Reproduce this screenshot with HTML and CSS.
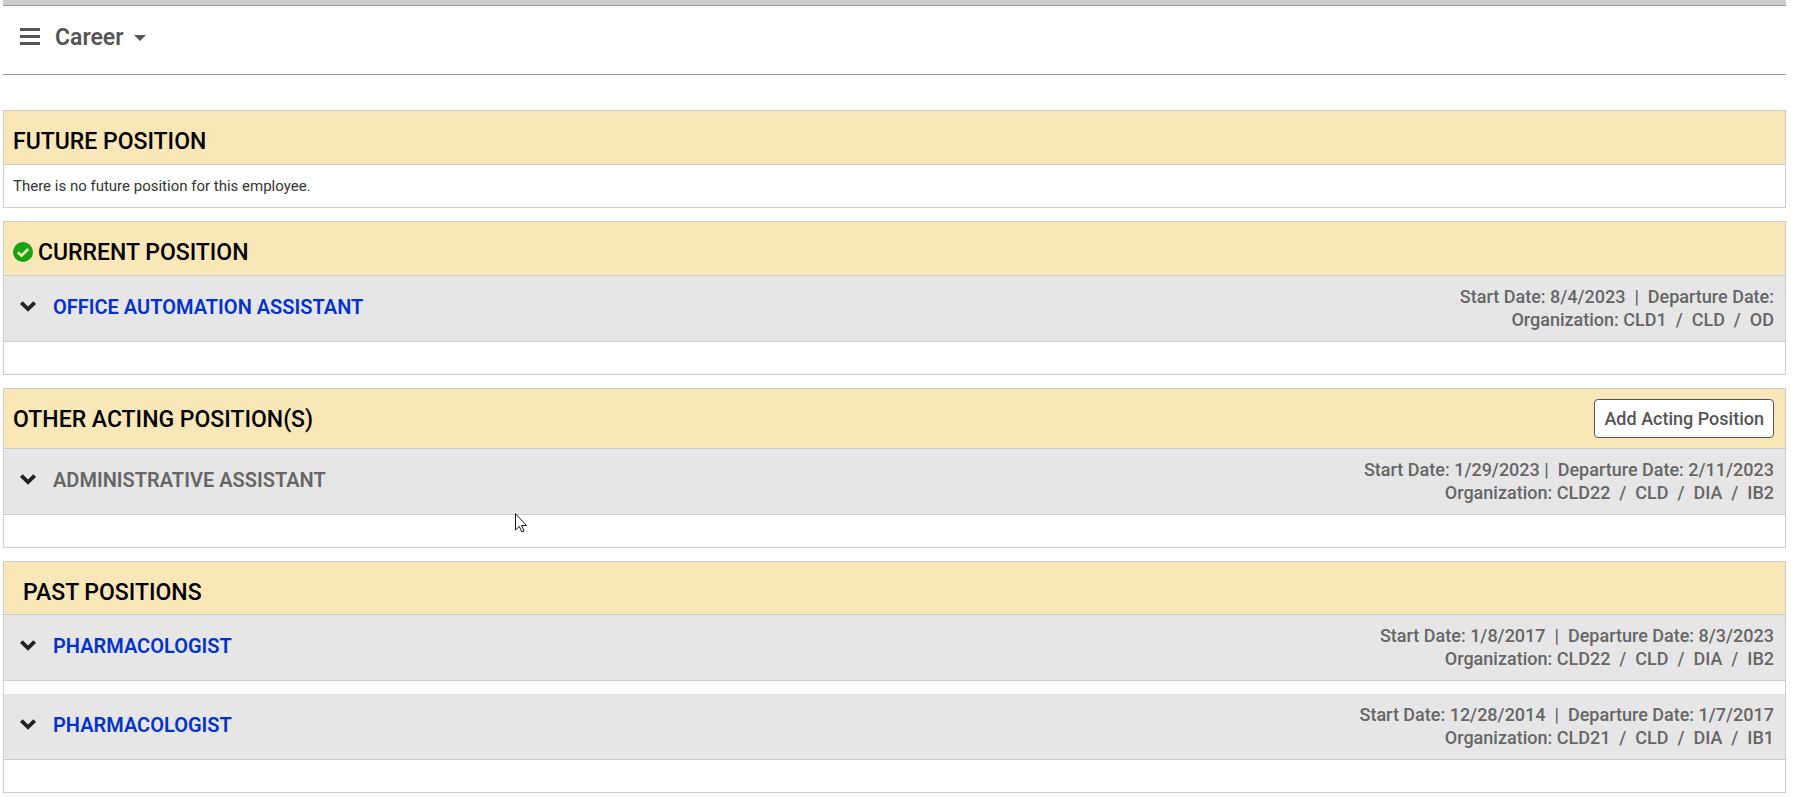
FILE: index.html
```html
<!DOCTYPE html>
<html lang="en">
<head>
<meta charset="utf-8">
<meta name="viewport" content="width=device-width, initial-scale=1">
<title>Career</title>
<link rel="stylesheet" href="styles.css">
</head>
<body>
<svg width="0" height="0" class="defs" aria-hidden="true">
  <symbol id="chevron" viewBox="0 0 16 11"><path d="M0 3 2.700.3 8 5.400 13.300.3 16 3 8 10.700z" fill="currentColor"/></symbol>
</svg>
<header class="topbar">
  <button class="menu" type="button" aria-label="Menu">
    <svg width="20" height="17" viewBox="0 0 20 17" aria-hidden="true"><path d="M0 0h20v3H0zM0 7h20v3H0zM0 14h20v3H0z" fill="currentColor"/></svg>
  </button>
  <button class="section-switch" type="button">Career
    <svg width="12" height="6" viewBox="0 0 12 6" aria-hidden="true"><path d="M0 0h12L6 6z" fill="currentColor"/></svg>
  </button>
</header>
<main class="cards">
  <section class="card">
    <div class="card-head"><h2>FUTURE POSITION</h2></div>
    <p class="empty">There is no future position for this employee.</p>
  </section>

  <section class="card">
    <div class="card-head">
      <svg class="check" width="20" height="20" viewBox="0 0 20 20" aria-hidden="true"><circle cx="10" cy="10" r="10" fill="#17a314"/><path d="M4.800 10.200 8.500 13.700l6.700-6.700" fill="none" stroke="#fae7b8" stroke-width="2.600"/></svg>
      <h2>CURRENT POSITION</h2>
    </div>
    <div class="position">
      <button class="toggle" type="button" aria-label="Expand"><svg width="16" height="11"><use href="#chevron"/></svg></button>
      <a class="title" href="#">OFFICE AUTOMATION ASSISTANT</a>
      <div class="meta">
        <div>Start Date: 8/4/2023&nbsp; |&nbsp; Departure Date:</div>
        <div>Organization: CLD1&nbsp; /&nbsp; CLD&nbsp; /&nbsp; OD</div>
      </div>
    </div>
    <div class="details"></div>
  </section>

  <section class="card">
    <div class="card-head with-action">
      <h2>OTHER ACTING POSITION(S)</h2>
      <button class="add" type="button">Add Acting Position</button>
    </div>
    <div class="position">
      <button class="toggle" type="button" aria-label="Expand"><svg width="16" height="11"><use href="#chevron"/></svg></button>
      <span class="title">ADMINISTRATIVE ASSISTANT</span>
      <div class="meta">
        <div>Start Date: 1/29/2023 |&nbsp; Departure Date: 2/11/2023</div>
        <div>Organization: CLD22&nbsp; /&nbsp; CLD&nbsp; /&nbsp; DIA&nbsp; /&nbsp; IB2</div>
      </div>
    </div>
    <div class="details"></div>
  </section>

  <section class="card">
    <div class="card-head indented"><h2>PAST POSITIONS</h2></div>
    <div class="position">
      <button class="toggle" type="button" aria-label="Expand"><svg width="16" height="11"><use href="#chevron"/></svg></button>
      <a class="title" href="#">PHARMACOLOGIST</a>
      <div class="meta">
        <div>Start Date: 1/8/2017&nbsp; |&nbsp; Departure Date: 8/3/2023</div>
        <div>Organization: CLD22&nbsp; /&nbsp; CLD&nbsp; /&nbsp; DIA&nbsp; /&nbsp; IB2</div>
      </div>
    </div>
    <div class="position spaced">
      <button class="toggle" type="button" aria-label="Expand"><svg width="16" height="11"><use href="#chevron"/></svg></button>
      <a class="title" href="#">PHARMACOLOGIST</a>
      <div class="meta">
        <div>Start Date: 12/28/2014&nbsp; |&nbsp; Departure Date: 1/7/2017</div>
        <div>Organization: CLD21&nbsp; /&nbsp; CLD&nbsp; /&nbsp; DIA&nbsp; /&nbsp; IB1</div>
      </div>
    </div>
    <div class="details"></div>
  </section>
</main>
<svg class="pointer" width="12" height="20" viewBox="0 0 12 20" aria-hidden="true"><path d="M.5.7v16.300l3.800-3.600 2.500 5.600 2.300-1-2.500-5.500h4.900z" fill="#fff" stroke="#15152a" stroke-width="1"/></svg>
</body>
</html>
```
FILE: styles.css
```css
* { box-sizing: border-box; }

body {
  margin: 0;
  padding: 0 13px 0 3px;
  background: #fff;
  color: #333;
  font-family: Roboto, "Liberation Sans", sans-serif;
  font-size: 16px;
}

button {
  font: inherit;
  color: inherit;
  background: none;
  border: 0;
  padding: 0;
  cursor: pointer;
}

svg { display: block; flex: none; }
.defs { position: absolute; }

.topbar {
  display: flex;
  align-items: flex-start;
  gap: 15px;
  padding: 19px 17px 21px;
  border-bottom: 1px solid #999;
  color: #555;
}
.topbar::before {
  content: "";
  position: absolute;
  top: 0;
  left: 3px;
  right: 13px;
  height: 5px;
  background: #ccc;
  border-bottom: 1px solid #999;
}
.menu { padding: 9px 0 2px; }
.section-switch {
  display: flex;
  align-items: center;
  gap: 11px;
  font-size: 23px;
  font-weight: 600;
  line-height: 30px;
  padding-top: 4px;
}

.cards {
  display: flex;
  flex-direction: column;
  gap: 13px;
  padding-top: 35px;
}
.card { border: 1px solid #ccc; }

.card-head {
  display: flex;
  align-items: center;
  gap: 5px;
  padding: 15px 11px 8px 9px;
  background: #fae7b8;
  border-bottom: 1px solid #ccc;
  color: #000;
}
.card-head h2 {
  margin: 0;
  padding-top: 2px;
  font-size: 23px;
  font-weight: 500;
  line-height: 28px;
}
.with-action {
  justify-content: space-between;
  padding-top: 10px;
  padding-bottom: 10px;
}
.indented { padding-left: 19px; padding-bottom: 7px; }

.add {
  height: 39px;
  padding: 0 9px;
  border: 1px solid #555;
  border-radius: 4px;
  background: #fff;
  color: #555;
  font-size: 18px;
  font-weight: 500;
}

.empty {
  margin: 0;
  padding: 9px;
  font-size: 15px;
  line-height: 24px;
}

.position {
  display: flex;
  align-items: flex-start;
  padding: 9px 11px 10px 16px;
  background: #e6e6e6;
  border-bottom: 1px solid #ccc;
  color: #666;
}
.spaced { margin-top: 13px; }
.toggle { padding: 16px 0; color: #222; }
.title {
  margin-left: 17px;
  font-size: 20px;
  font-weight: 600;
  line-height: 44px;
  color: #666;
  text-decoration: none;
}
a.title { color: #0433cc; }
.meta {
  margin-left: auto;
  font-size: 18px;
  font-weight: 500;
  line-height: 23px;
  text-align: right;
}
.details { height: 32px; }

.pointer {
  position: absolute;
  left: 515px;
  top: 513px;
}
```
